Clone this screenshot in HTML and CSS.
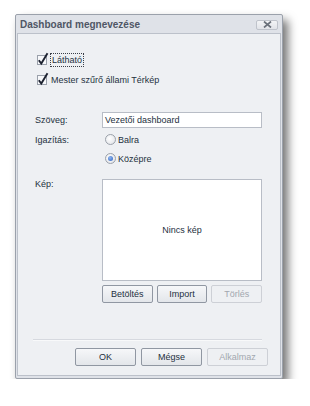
FILE: index.html
```html
<!DOCTYPE html>
<html lang="hu">
<head>
    <meta charset="UTF-8">
    <title>Dashboard megnevezése</title>
    <link rel="stylesheet" href="styles.css">
</head>
<body>
    <div class="dialog">
        <div class="titlebar">
            <span class="title">Dashboard megnevezése</span>
            <button class="close" aria-label="Bezárás">
                <svg width="9" height="7" viewBox="0 0 9 7"><path d="M1 0.5 L8 6.5 M8 0.5 L1 6.5" stroke="#6a707a" stroke-width="1.7"/></svg>
            </button>
        </div>
        <div class="content">
            <div class="checks">
                <label class="check">
                    <svg class="box" width="13" height="14" viewBox="0 0 13 14">
                        <rect x="0.5" y="3.5" width="9" height="9" fill="#f7f8fa" stroke="#9aa0aa"/>
                        <path d="M1.8 8.2 L4.3 11.6 L10.5 1.2" fill="none" stroke="#1d2230" stroke-width="1.9"/>
                    </svg>
                    <span class="focus">Látható</span>
                </label>
                <label class="check">
                    <svg class="box" width="13" height="14" viewBox="0 0 13 14">
                        <rect x="0.5" y="3.5" width="9" height="9" fill="#f7f8fa" stroke="#9aa0aa"/>
                        <path d="M1.8 8.2 L4.3 11.6 L10.5 1.2" fill="none" stroke="#1d2230" stroke-width="1.9"/>
                    </svg>
                    <span>Mester szűrő állami Térkép</span>
                </label>
            </div>

            <div class="form">
                <span class="lbl">Szöveg:</span>
                <div class="field"><span class="input">Vezetői dashboard</span></div>

                <span class="lbl">Igazítás:</span>
                <div class="radios">
                    <label class="radio"><span class="dot"></span>Balra</label>
                    <label class="radio"><span class="dot on"></span>Középre</label>
                </div>

                <span class="lbl top">Kép:</span>
                <div class="image-col">
                    <div class="image">Nincs kép</div>
                    <div class="img-buttons">
                        <button class="btn">Betöltés</button>
                        <button class="btn">Import</button>
                        <button class="btn" disabled>Törlés</button>
                    </div>
                </div>
            </div>

            <div class="sep"></div>

            <div class="footer">
                <button class="btn wide">OK</button>
                <button class="btn wide">Mégse</button>
                <button class="btn wide" disabled>Alkalmaz</button>
            </div>
        </div>
    </div>
</body>
</html>
```

FILE: styles.css
```css
/* alap */
body {
    margin: 0;
    background: #ffffff;
    font-family: 'Liberation Sans', Arial, sans-serif;
    font-size: 9px;
    color: #243040;
}

.dialog {
    width: 268px;
    height: 365px;
    margin: 14px 0 0 15px;
    box-sizing: border-box;
    border: 1px solid #9ba1ab;
    border-radius: 2px;
    background: #dfe2e8;
    padding: 0 1px 2px 1px;
    display: flex;
    flex-direction: column;
    box-shadow: 5px 6px 10px rgba(0, 0, 0, 0.55);
}

.titlebar {
    height: 18px;
    display: flex;
    align-items: center;
    justify-content: space-between;
    padding: 0 3px 0 3px;
    flex: none;
}

.title {
    font-size: 10px;
    font-weight: bold;
    color: #4f5665;
}

.close {
    width: 22px;
    height: 10px;
    margin-top: 1px;
    padding: 0;
    border: 1px solid #bfc3cb;
    border-radius: 2px;
    background: linear-gradient(#f3f4f6, #e1e3e8);
    display: flex;
    align-items: center;
    justify-content: center;
}

.content {
    flex: 1;
    border: 1px solid #bcc1ca;
    background: #eef0f3;
    padding: 16px 0 0 0;
    display: flex;
    flex-direction: column;
}

.checks {
    padding-left: 19px;
}

.check {
    height: 20px;
    display: flex;
    align-items: center;
}

.check .box {
    margin-top: -2px;
    margin-right: 1px;
}

.focus {
    outline: 1px dotted #3a3f48;
    padding: 1px 1px;
}

.form {
    margin-top: 20px;
    display: grid;
    grid-template-columns: 67px 160px;
    padding-left: 17px;
}

.lbl {
    height: 20px;
    display: flex;
    align-items: center;
}

.lbl.top {
    align-items: flex-start;
}

.field {
    height: 20px;
    display: flex;
    align-items: center;
}

.input {
    display: block;
    width: 100%;
    height: 16px;
    line-height: 14px;
    box-sizing: border-box;
    border: 1px solid #b8bdc6;
    background: #ffffff;
    padding-left: 2px;
}

.radios {
    display: flex;
    flex-direction: column;
    margin-bottom: 11px;
}

.radio {
    height: 19px;
    display: flex;
    align-items: center;
    gap: 2px;
    margin-left: 3px;
}

.dot {
    width: 9px;
    height: 9px;
    border-radius: 50%;
    border: 1px solid #9ba1aa;
    background: radial-gradient(circle at 40% 40%, #ffffff, #dcdfe4);
    display: flex;
    align-items: center;
    justify-content: center;
}

.dot.on::after {
    content: '';
    width: 5px;
    height: 5px;
    border-radius: 50%;
    background: radial-gradient(circle at 40% 35%, #8fb6f0, #2f63c0);
}

.image-col {
    display: flex;
    flex-direction: column;
}

.image {
    height: 102px;
    box-sizing: border-box;
    border: 1px solid #b8bdc6;
    background: #ffffff;
    display: flex;
    align-items: center;
    justify-content: center;
}

.img-buttons {
    margin-top: 4px;
    display: flex;
    gap: 4px;
}

.btn {
    flex: 1;
    height: 18px;
    padding: 0;
    font-family: inherit;
    font-size: 9px;
    color: #243040;
    border: 1px solid #9097a2;
    border-radius: 2px;
    background: linear-gradient(#f6f7f9, #e3e6ea);
}

.btn:disabled {
    color: #a2a7af;
    border-color: #cdd0d6;
    background: #eef0f3;
}

.sep {
    margin: 36px 18px 0 15px;
    height: 1px;
    background: #d6d9df;
    border-bottom: 1px solid #f8f9fa;
}

.footer {
    margin-top: 7px;
    display: flex;
    justify-content: flex-end;
    gap: 5px;
    padding-right: 12px;
}

.btn.wide {
    flex: none;
    width: 61px;
}
```
